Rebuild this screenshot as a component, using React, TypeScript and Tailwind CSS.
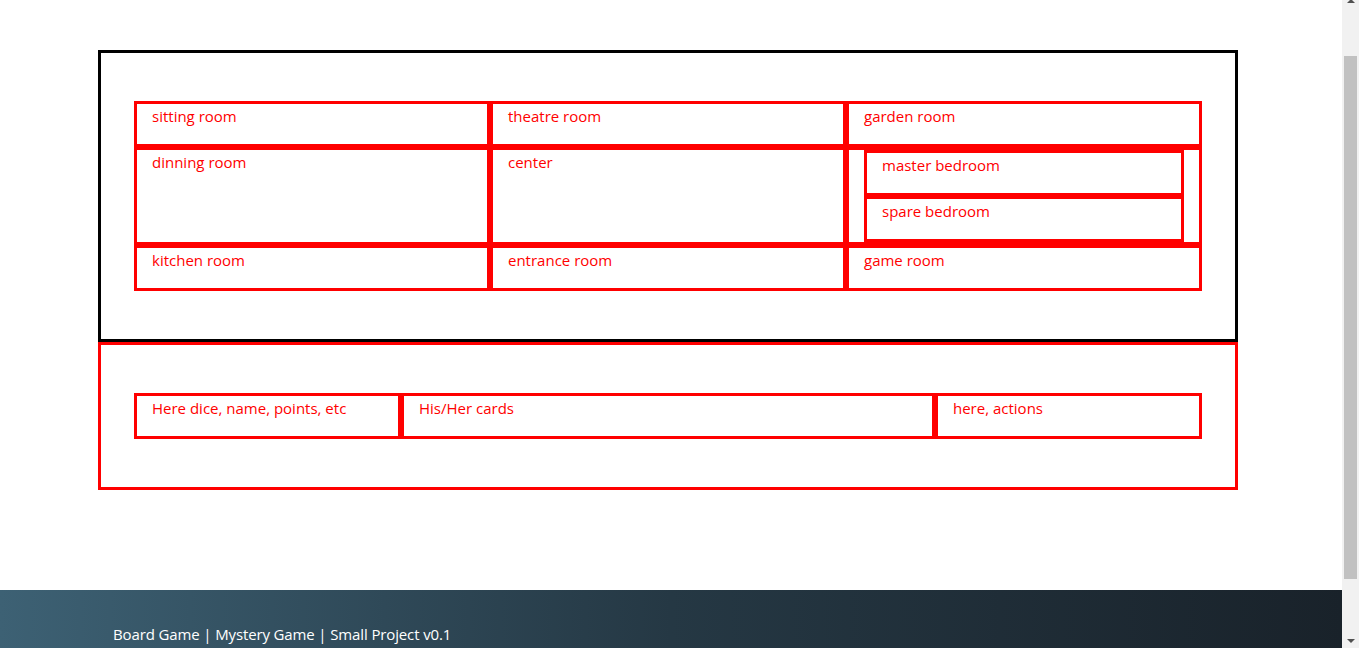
import React from "react";

const cell =
  "border-[3px] border-[#ff0000] px-[15px] text-[#ff0000] leading-6 overflow-hidden";

function Room({ name, tall }: { name: string; tall?: boolean }) {
  return <div className={`${cell} ${tall ? "h-[98px]" : "h-[46px]"}`}>{name}</div>;
}

function Scrollbar() {
  return (
    <div className="w-[17px] h-full bg-[#f1f1f1] flex flex-col items-center">
      <div className="h-[3px] w-full flex justify-center overflow-hidden">
        <div className="w-0 h-0 -mt-[1px] border-l-[4px] border-r-[4px] border-b-[4px] border-l-transparent border-r-transparent border-b-[#505050]" />
      </div>
      <div className="mt-[53px] w-[13px] h-[523px] bg-[#c1c1c1]" />
      <div className="mt-[60px] w-0 h-0 border-l-[4px] border-r-[4px] border-t-[4px] border-l-transparent border-r-transparent border-t-[#505050]" />
    </div>
  );
}

export default function App() {
  return (
    <div
      className="w-[1366px] h-[648px] flex overflow-hidden bg-white"
      style={{ fontFamily: '"Open Sans", "Noto Sans", sans-serif' }}
    >
      <div className="w-[1342px] flex flex-col pt-[50px] text-[15px]">
        <div className="ml-[98px] w-[1140px] border-[3px] border-black px-[33px] py-[48px]">
          <div className="grid grid-cols-3">
            <Room name="sitting room" />
            <Room name="theatre room" />
            <Room name="garden room" />
            <Room name="dinning room" tall />
            <Room name="center" tall />
            <div className="border-[3px] border-[#ff0000] h-[98px] px-[15px] flex flex-col">
              <div className={`${cell} h-[46px]`}>master bedroom</div>
              <div className={`${cell} h-[46px]`}>spare bedroom</div>
            </div>
            <Room name="kitchen room" />
            <Room name="entrance room" />
            <Room name="game room" />
          </div>
        </div>
        <div className="ml-[98px] w-[1140px] border-[3px] border-[#ff0000] px-[33px] py-[48px]">
          <div className="grid grid-cols-[1fr_2fr_1fr]">
            <Room name="Here dice, name, points, etc" />
            <Room name="His/Her cards" />
            <Room name="here, actions" />
          </div>
        </div>
        <footer className="mt-[100px] flex-1 bg-gradient-to-r from-[#3d6174] via-[#253844] to-[#19222a] pl-[113px] pt-8 text-white tracking-[-0.13px] leading-6">
          Board Game | Mystery Game | Small Project v0.1
        </footer>
      </div>
      <Scrollbar />
      <div className="flex-1 bg-white" />
    </div>
  );
}
